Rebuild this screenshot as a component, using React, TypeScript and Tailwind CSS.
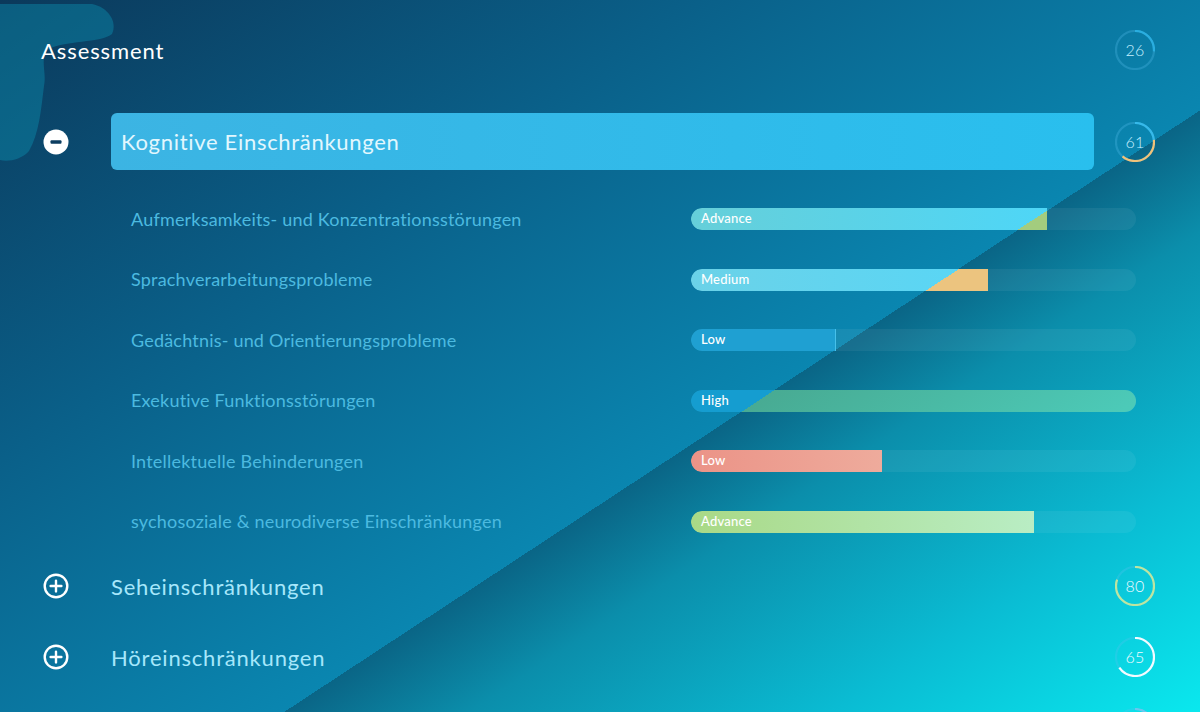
import React from "react";

// Assessment-Übersicht: eine aufgeklappte Kategorie mit Teilbereichen und Balken,
// darunter die zugeklappten Kategorien. Das Dreieck unten rechts zeigt die
// zweite Farbvariante der Balken (bg-fixed, damit die Kante über alles gleich liegt).

type Seg = { from: number; to: number; color: string };

const R = 19;
const CIRC = 2 * Math.PI * R;

function Ring({ value, segs, text = "text-[#c8f0ff]" }: { value?: number; segs: Seg[]; text?: string }) {
  return (
    <div className="relative flex h-10 w-10 shrink-0 items-center justify-center">
      <svg className="absolute inset-0 -rotate-90" width="40" height="40" viewBox="0 0 40 40">
        <circle cx="20" cy="20" r={R} fill="none" stroke="rgba(90,195,240,0.28)" strokeWidth="2.2" />
        {segs.map((s, i) => (
          <circle
            key={i}
            cx="20"
            cy="20"
            r={R}
            fill="none"
            stroke={s.color}
            strokeWidth="2.2"
            strokeDasharray={`${(s.to - s.from) * CIRC} ${CIRC}`}
            strokeDashoffset={-s.from * CIRC}
          />
        ))}
      </svg>
      {value !== undefined ? (
        <span className={`relative text-[16px] font-light tracking-[0.3px] ${text}`}>{value}</span>
      ) : null}
    </div>
  );
}

function MinusIcon() {
  return (
    <svg width="26" height="26" viewBox="0 0 26 26">
      <circle cx="13" cy="13" r="12.5" fill="#ffffff" />
      <rect x="7.5" y="11.2" width="11" height="3.6" rx="1" fill="#0c3d60" />
    </svg>
  );
}

function PlusIcon() {
  return (
    <svg width="26" height="26" viewBox="0 0 26 26" fill="none" stroke="#ffffff" strokeWidth="2.4">
      <circle cx="13" cy="13" r="11.3" />
      <path d="M13 7.6v10.8M7.6 13h10.8" strokeLinecap="round" />
    </svg>
  );
}

type Row = { label: string; level: string; pct: number; fill: string; alt?: string };

const rows: Row[] = [
  {
    label: "Aufmerksamkeits- und Konzentrationsstörungen",
    level: "Advance",
    pct: 80,
    fill: "bg-[linear-gradient(90deg,#66cfd9,#4ed6f7)]",
    alt: "bg-[linear-gradient(146.7deg,transparent_59.9%,#a3cc7e_59.9%)]",
  },
  {
    label: "Sprachverarbeitungsprobleme",
    level: "Medium",
    pct: 66.8,
    fill: "bg-[linear-gradient(90deg,#6bd2e8,#58d6f6)]",
    alt: "bg-[linear-gradient(146.7deg,transparent_59.9%,#ecc47f_59.9%)]",
  },
  {
    label: "Gedächtnis- und Orientierungsprobleme",
    level: "Low",
    pct: 32.6,
    fill: "bg-[#1fa0d2] shadow-[inset_-1px_0_0_#47c0ea]",
  },
  {
    label: "Exekutive Funktionsstörungen",
    level: "High",
    pct: 100,
    fill: "bg-[#159dd0]",
    alt: "bg-[linear-gradient(146.7deg,transparent_59.9%,#48ab93_59.9%,#4ccab8_76.5%)]",
  },
  {
    label: "Intellektuelle Behinderungen",
    level: "Low",
    pct: 43,
    fill: "bg-[linear-gradient(90deg,#eb9387,#eeab9c)]",
  },
  {
    label: "sychosoziale & neurodiverse Einschränkungen",
    level: "Advance",
    pct: 77,
    fill: "bg-[linear-gradient(90deg,#a9d986,#b9edc4)]",
  },
];

function Bar({ row }: { row: Row }) {
  return (
    <div className="h-[22px] flex-1 overflow-hidden rounded-full bg-white/[0.06]">
      <div className={`relative h-full overflow-hidden rounded-l-full ${row.fill}`} style={{ width: `${row.pct}%` }}>
        {row.alt ? <div className={`absolute inset-0 bg-fixed ${row.alt}`} /> : null}
        <span className="absolute left-[10px] top-1/2 -translate-y-1/2 text-[13px] font-medium tracking-[0.2px] text-white">
          {row.level}
        </span>
      </div>
    </div>
  );
}

const collapsed = [
  { title: "Seheinschränkungen", value: 80, segs: [{ from: 0, to: 0.8, color: "#bde5a0" }], text: "text-[#eefaff]" },
  { title: "Höreinschränkungen", value: 65, segs: [{ from: 0, to: 0.65, color: "#f3fbff" }], text: "text-[#f3fbff]" },
];

export default function App() {
  return (
    <div className="relative h-[712px] w-full overflow-hidden bg-[linear-gradient(146.7deg,#0b395b_0%,#0a5f88_30%,#0a86b0_59.9%,#0a6586_59.9%,#0b8eab_68%,#0abcd3_84%,#0ae8ee_100%)] [font-family:Lato,'Noto_Sans',sans-serif]">
      <svg className="pointer-events-none absolute left-0 top-0" width="130" height="170" viewBox="0 0 130 170">
        <path
          d="M0 4 L92 4 C108 7 118 22 112 34 C102 43 64 40 47 50 C40 60 47 74 44 86 C41 110 39 134 29 151 C21 160 8 162 0 160 Z"
          fill="rgba(10,140,172,0.45)"
        />
      </svg>

      <div className="relative pl-[41px] pr-[45px] pt-[30px]">
        <div className="flex h-10 items-center justify-between">
          <h1 className="text-[22px] font-normal tracking-[0.9px] text-white">Assessment</h1>
          <Ring value={26} segs={[{ from: 0, to: 0.26, color: "#2aaee0" }]} />
        </div>

        <div className="mt-[43px] flex items-center">
          <div className="w-[70px] pl-[2px]">
            <MinusIcon />
          </div>
          <div className="flex h-[57px] flex-1 items-center rounded-md bg-[linear-gradient(90deg,#3cb4e3,#29bfee)] pl-[10px] text-[22px] tracking-[0.7px] text-[#e2f7fe]">
            Kognitive Einschränkungen
          </div>
          <div className="ml-[21px]">
            <Ring
              value={61}
              segs={[
                { from: 0, to: 0.23, color: "#36b9ea" },
                { from: 0.23, to: 0.61, color: "#f0c27a" },
              ]}
            />
          </div>
        </div>

        <div className="mt-[19px]">
          {rows.map((row) => (
            <div key={row.label} className="flex h-[60.5px] items-center pl-[90px] pr-[19px]">
              <span className="w-[560px] shrink-0 text-[18px] font-normal tracking-[0.2px] text-[#4cbae0]">
                {row.label}
              </span>
              <Bar row={row} />
            </div>
          ))}
        </div>

        <div className="-mt-[1.5px]">
          {collapsed.map((c) => (
            <div key={c.title} className="flex h-[71px] items-center">
              <div className="w-[70px] pl-[2px]">
                <PlusIcon />
              </div>
              <span className="flex-1 text-[22px] tracking-[0.8px] text-[#a6e7fb]">{c.title}</span>
              <Ring value={c.value} segs={c.segs} text={c.text} />
            </div>
          ))}

          {/* nächste Kategorie, nur der obere Rand des Rings ist noch im Bild */}
          <div className="flex h-[71px] items-center justify-end">
            <Ring segs={[{ from: 0, to: 0.42, color: "#6cc6ee" }]} />
          </div>
        </div>
      </div>
    </div>
  );
}
